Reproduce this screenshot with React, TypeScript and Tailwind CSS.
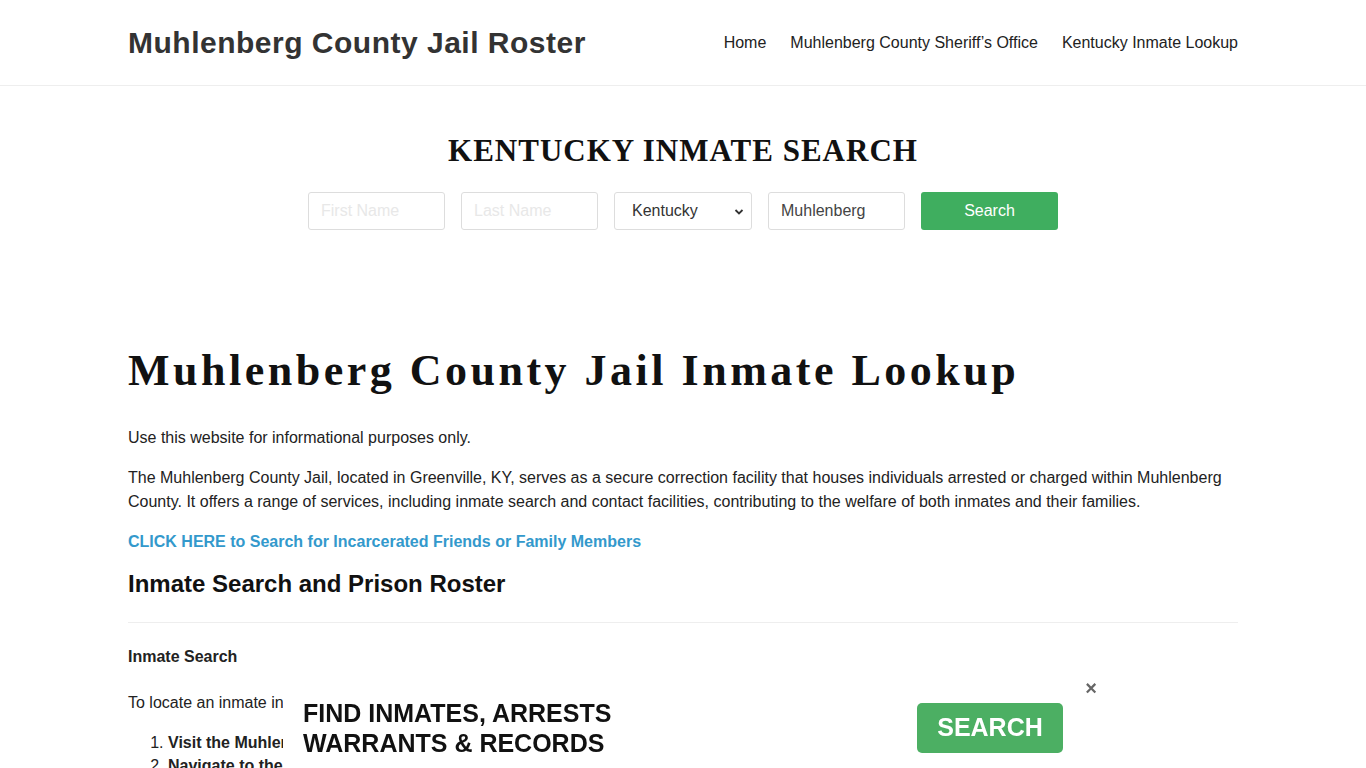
import React from "react";

export default function App() {
  const sans = { fontFamily: '"Liberation Sans", Arial, sans-serif' };
  return (
    <div className="min-h-screen bg-white text-[#222]" style={sans}>
      <header className="border-b border-[#eeeeee] bg-white">
        <div className="mx-auto flex h-[85px] w-[1110px] items-center justify-between">
          <div className="text-[30px] font-bold text-[#333] tracking-[0.5px]">Muhlenberg County Jail Roster</div>
          <nav className="flex gap-6 text-[16px] text-[#222]">
            <a>Home</a>
            <a>Muhlenberg County Sheriff’s Office</a>
            <a>Kentucky Inmate Lookup</a>
          </nav>
        </div>
      </header>

      <section className="pt-[46px] pb-[70px]">
        <h2
          className="text-center text-[31px] font-bold tracking-[1px] text-[#111] leading-[38px]"
          style={{ fontFamily: '"Liberation Serif", "Times New Roman", serif' }}
        >
          KENTUCKY INMATE SEARCH
        </h2>
        <div className="mt-[22px] flex justify-center gap-4">
          <input
            placeholder="First Name"
            className="h-[38px] w-[137px] rounded-[3px] border border-[#dddddd] px-3 text-[16px] placeholder:text-[#e8e8e8]"
          />
          <input
            placeholder="Last Name"
            className="h-[38px] w-[137px] rounded-[3px] border border-[#dddddd] px-3 text-[16px] placeholder:text-[#e8e8e8]"
          />
          <div className="relative flex h-[38px] w-[138px] items-center rounded-[3px] border border-[#dddddd] pl-[17px] text-[16px] text-[#333]">
            Kentucky
            <svg className="absolute right-[7px] top-[15px]" width="10" height="8" viewBox="0 0 10 8">
              <path d="M1.5 2 L5 5.5 L8.5 2" stroke="#333" strokeWidth="1.8" fill="none" />
            </svg>
          </div>
          <input
            defaultValue="Muhlenberg"
            className="h-[38px] w-[137px] rounded-[3px] border border-[#dddddd] px-3 text-[16px] text-[#444]"
          />
          <button className="h-[38px] w-[137px] rounded-[3px] bg-[#3fae5f] text-[16px] text-white">Search</button>
        </div>
      </section>

      <main className="mx-auto w-[1110px] pt-[45px]">
        <h1
          className="text-[44px] font-bold leading-[52px] tracking-[3.5px] text-[#111]"
          style={{ fontFamily: '"Liberation Serif", "Times New Roman", serif' }}
        >
          Muhlenberg County Jail Inmate Lookup
        </h1>
        <p className="mt-[29px] text-[16px] leading-[24px]">Use this website for informational purposes only.</p>
        <p className="mt-4 text-[16px] leading-[24px]">
          The Muhlenberg County Jail, located in Greenville, KY, serves as a secure correction facility that houses individuals arrested or charged within Muhlenberg County. It offers a range of services, including inmate search and contact facilities, contributing to the welfare of both inmates and their families.
        </p>
        <p className="mt-4 text-[16px] font-bold leading-[24px] text-[#3399cc]">CLICK HERE to Search for Incarcerated Friends or Family Members</p>
        <h2 className="mt-[14px] text-[24px] font-bold leading-[32px] text-[#111]">Inmate Search and Prison Roster</h2>
        <hr className="mt-[22px] border-[#eeeeee]" />
        <h3 className="mt-[22px] text-[16px] font-bold leading-[24px]">Inmate Search</h3>
        <p className="mt-[22px] text-[16px] leading-[24px]">
          To locate an inmate in Muhlenberg County Jail, follow these steps:
        </p>
        <ol className="mt-4 list-decimal pl-10 text-[16px] leading-[23px]">
          <li><b>Visit the Muhlenberg County Jail Inmate Roster:</b> Go to the official website of the sheriff's office.</li>
          <li><b>Navigate to the Inmate Roster:</b> Look for a link or tab on the menu labeled as 'Inmate Information'.</li>
        </ol>
      </main>

      <div className="fixed bottom-0 left-1/2 h-[98px] w-[800px] -translate-x-1/2 bg-white">
        <div className="flex h-full items-start justify-between pl-[20px] pr-[20px] pt-[28px]">
          <div className="text-[25px] font-bold leading-[30px] text-[#111]">
            FIND INMATES, ARRESTS
            <br />
            WARRANTS &amp; RECORDS
          </div>
          <button className="mt-[5px] h-[50px] w-[146px] rounded-[5px] bg-[#4caf63] text-[25px] font-bold text-white">
            SEARCH
          </button>
        </div>
        <div className="absolute right-[-14px] top-[8px] text-[20px] font-bold leading-[20px] text-[#666]">×</div>
      </div>
    </div>
  );
}
